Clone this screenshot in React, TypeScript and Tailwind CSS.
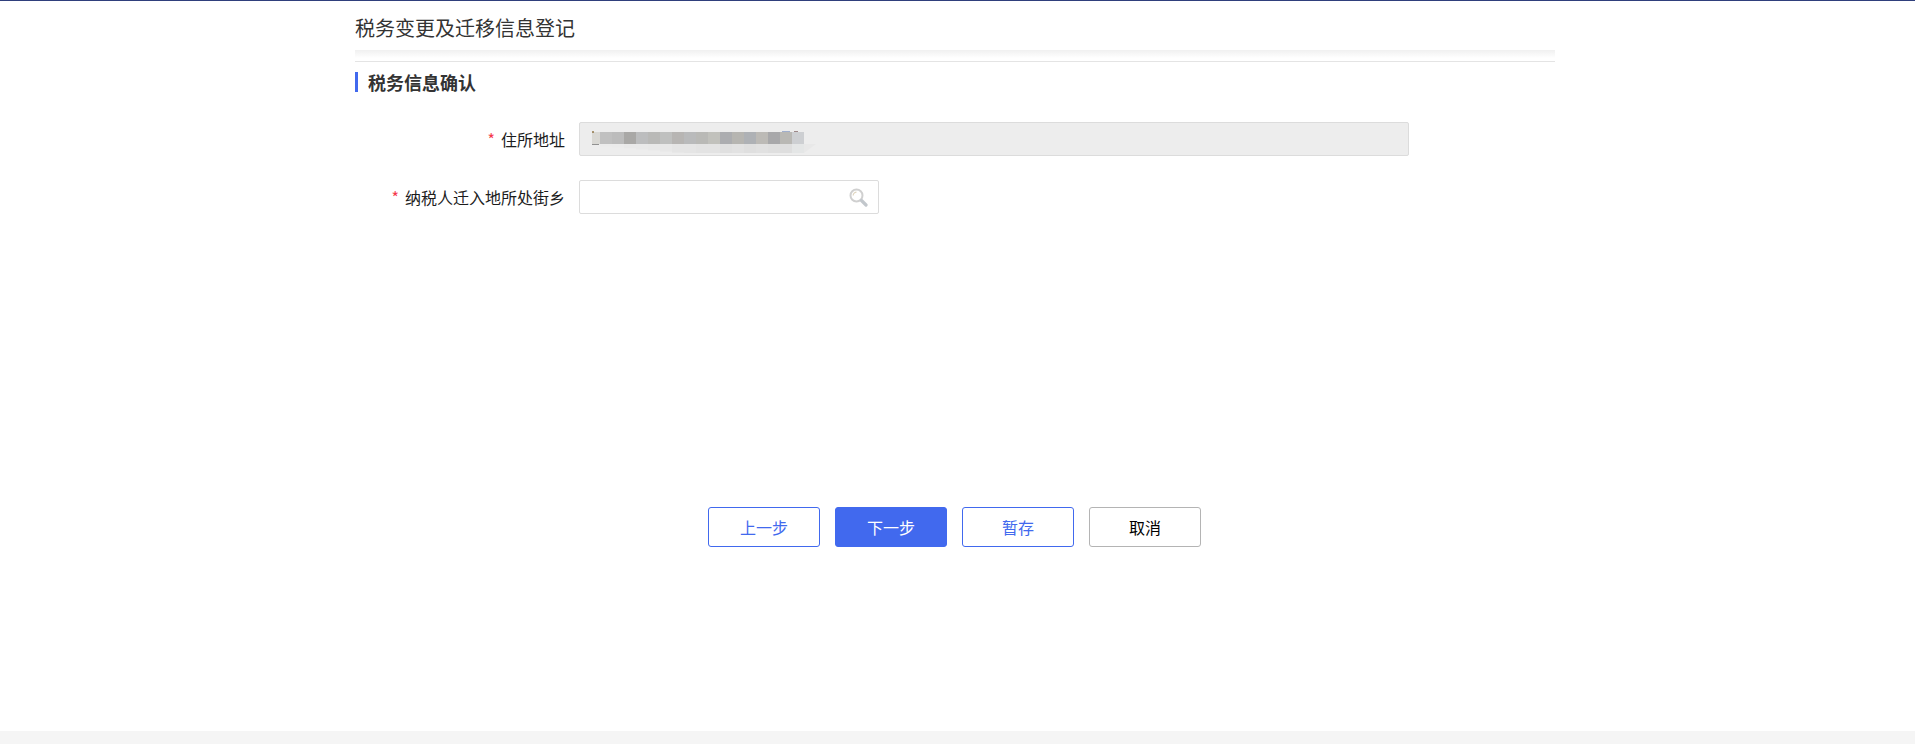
const font = { fontFamily: '"Noto Sans CJK SC", "Noto Sans", sans-serif' };

const mosaicTop = ["#d9d8d4", "#c0c0c0", "#bcbcbc", "#a9a8a6", "#bcbdbe", "#b9b9b7", "#bfc0bf", "#b7b5b3", "#b9babb", "#b9b9b6", "#c1c1bc", "#acadb0", "#b6b5b1", "#aeb1b5", "#bcbab6", "#a8a8aa", "#b9b8b4", "#cdcfd2"];
const mosaicBottom = ["#ececec", "#ebebeb", "#ebebeb", "#e9e9e9", "#e9e9e9", "#e8e8e8", "#e8e8e8", "#e5e5e5", "#e5e5e5", "#e3e3e3", "#e3e3e3", "#e0e0e0", "#e2e2e2", "#dfdfdf", "#e1e1e1", "#dfdfdf", "#dedede", "#e4e6e6"];

function Mosaic() {
  return (
    <svg width="230" height="26" viewBox="0 0 230 26" className="block">
      {mosaicTop.map((c, i) => (
        <rect key={i} x={i === 0 ? 0 : i * 12 - 4} y="4" width={i === 0 ? 8 : 12} height="12" fill={c} />
      ))}
      {mosaicBottom.map((c, i) => {
        const x0 = i === 0 ? 0 : i * 12 - 4;
        const x1 = i * 12 + 8;
        const bottom = Math.min(25, 17 + i * 1.1);
        return <polygon key={i} points={`${x0},16 ${x1},16 ${x1},${bottom} ${x0},${bottom}`} fill={c} />;
      })}
      <polygon points="212,16 224,16 212,25" fill="#e8e8e8" />
      <rect x="0" y="3" width="2" height="2" fill="#8a6d3b" opacity="0.7" />
      <rect x="0" y="16" width="7" height="1" fill="#555555" opacity="0.6" />
      <rect x="190" y="3" width="8" height="1" fill="#6c85b8" opacity="0.6" />
      <rect x="202" y="3" width="4" height="1" fill="#7a5c5c" opacity="0.7" />
    </svg>
  );
}

function SearchIcon() {
  return (
    <svg width="19" height="19" viewBox="0 0 19 19" fill="none" className="block">
      <circle cx="7.5" cy="7.5" r="6" stroke="#d0d0d0" strokeWidth="2" />
      <path d="M4.2 7.5 A3.3 3.3 0 0 1 7.5 4.2" stroke="#e0d6c0" strokeWidth="1.2" />
      <path d="M12.5 12.5 L17 17" stroke="#c2c7cc" strokeWidth="3.2" strokeLinecap="round" />
    </svg>
  );
}

function Label({ text }: { text: string }) {
  return (
    <label className="w-[224px] shrink-0 pr-[14px] text-right text-[16px] leading-[34px] text-[#1c1c1c]">
      <span className="mr-[6px] text-[#f5394b]">*</span>
      {text}
    </label>
  );
}

export default function App() {
  return (
    <div className="flex h-screen flex-col overflow-hidden border-t border-[#2f3f7c] bg-white" style={font}>
      <main className="ml-[355px] w-[1200px] flex-1">
        <h1 className="h-[49px] pt-[11px] text-[20px] leading-[32px] font-normal text-[#333333]">税务变更及迁移信息登记</h1>
        <div className="h-[8px] bg-gradient-to-b from-[#f0f0f0] to-white" />
        <div className="mt-[3px] h-px bg-[#e4e4e4]" />

        <h2 className="mt-[10px] h-[20px] border-l-[3px] border-[#4169ee] pl-[10px] text-[18px] leading-[20px] font-bold text-[#333333]">
          税务信息确认
        </h2>

        <div className="mt-[30px] flex flex-col gap-[24px]">
          <div className="flex">
            <Label text="住所地址" />
            <div className="flex h-[34px] w-[830px] items-start rounded-[2px] border border-[#dcdcdc] bg-[#ededed] pt-[5px] pl-[12px]">
              <Mosaic />
            </div>
          </div>
          <div className="flex">
            <Label text="纳税人迁入地所处街乡" />
            <div className="flex h-[34px] w-[300px] items-center justify-end rounded-[2px] border border-[#dcdcdc] bg-white pr-[10px]">
              <SearchIcon />
            </div>
          </div>
        </div>

        <div className="mt-[293px] ml-[353px] flex gap-[15px]">
          <button className="h-[40px] w-[112px] rounded-[3px] border border-[#4169ee] bg-white text-[16px] text-[#4169ee]">上一步</button>
          <button className="h-[40px] w-[112px] rounded-[3px] border border-[#4169ee] bg-[#4169ee] text-[16px] text-white">下一步</button>
          <button className="h-[40px] w-[112px] rounded-[3px] border border-[#4169ee] bg-white text-[16px] text-[#4169ee]">暂存</button>
          <button className="h-[40px] w-[112px] rounded-[3px] border border-[#b4b4b4] bg-white text-[16px] text-black">取消</button>
        </div>
      </main>
      <footer className="h-[13px] bg-[#f5f5f5]" />
    </div>
  );
}
